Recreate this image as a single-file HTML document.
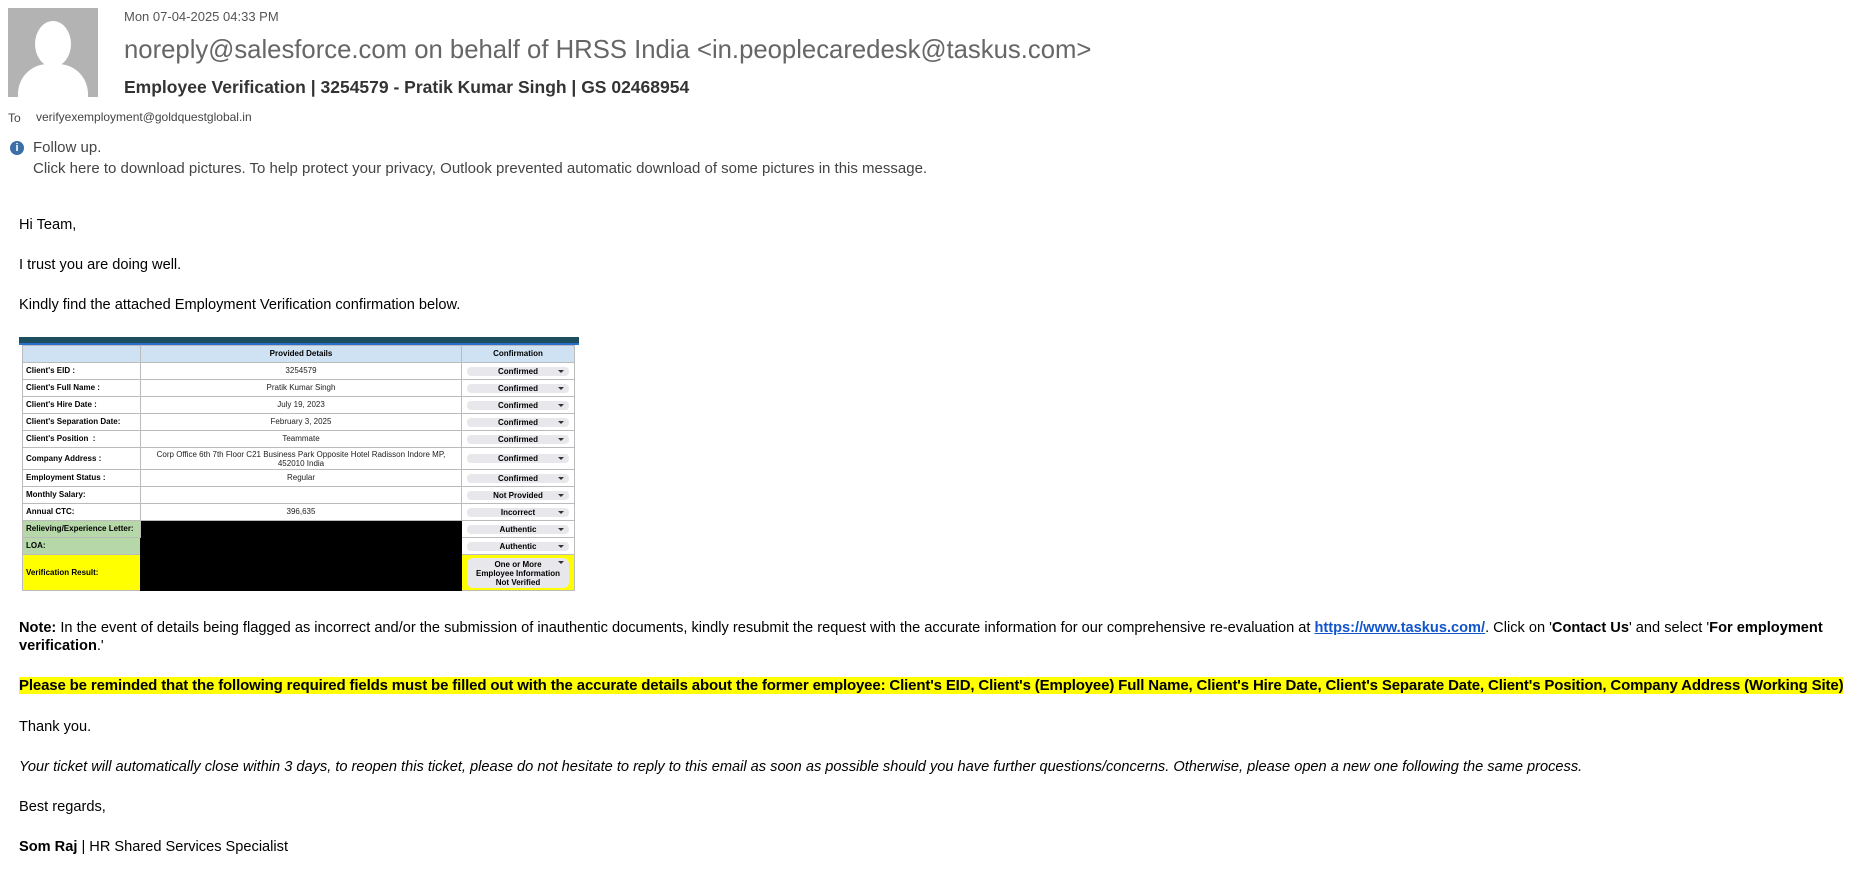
<!DOCTYPE html>
<html><head><meta charset="utf-8"><style>
*{margin:0;padding:0;box-sizing:border-box}
body{width:1858px;height:877px;background:#fff;position:relative;overflow:hidden;font-family:"Liberation Sans",Arial,sans-serif;color:#000}
.a{position:absolute;white-space:nowrap}
.b{font-size:14.6px;left:19px}
table{position:absolute;left:22px;top:345px;border-collapse:collapse;font-size:8px;line-height:1;font-family:"Liberation Sans",Arial,sans-serif}
td{border:1px solid #bbb;height:17px;padding:0 3px;vertical-align:middle}
td.l{width:118px;font-weight:bold}
td.m{width:321px;text-align:center;color:#222}
td.r{width:113px;text-align:center;padding:0 5px}
.p{background:#e8e8ec;border-radius:4px;height:9px;line-height:9px;font-weight:bold;position:relative}
.p:after{content:"";position:absolute;right:5px;top:3px;border-left:3px solid transparent;border-right:3px solid transparent;border-top:3px solid #333}
</style></head><body>
<div class="a" style="left:8px;top:8px;width:90px;height:89px;background:#b3b3b3;overflow:hidden">
<div style="position:absolute;left:27px;top:13px;width:36px;height:46px;border-radius:50%;background:#fff"></div>
<div style="position:absolute;left:10px;top:56px;width:70px;height:60px;border-radius:30px 30px 0 0;background:#fff"></div>
</div>
<div class="a" style="left:124px;top:9px;font-size:13px;color:#555">Mon 07-04-2025 04:33 PM</div>
<div class="a" style="left:124px;top:36px;font-size:25.7px;color:#666">noreply@salesforce.com on behalf of HRSS India &lt;in.peoplecaredesk@taskus.com&gt;</div>
<div class="a" style="left:124px;top:77px;font-size:17.5px;font-weight:bold;color:#333">Employee Verification | 3254579 - Pratik Kumar Singh | GS 02468954</div>
<div class="a" style="left:8px;top:111px;font-size:12px;color:#444">To</div>
<div class="a" style="left:36px;top:110px;font-size:12px;color:#444">verifyexemployment@goldquestglobal.in</div>
<div class="a" style="left:10px;top:141px;width:14px;height:14px;border-radius:50%;background:#3c6ea8;color:#fff;font-size:11px;font-weight:bold;text-align:center;line-height:14px">i</div>
<div class="a" style="left:33px;top:139px;font-size:15px;color:#444">Follow up.</div>
<div class="a" style="left:33px;top:160px;font-size:15px;color:#444">Click here to download pictures. To help protect your privacy, Outlook prevented automatic download of some pictures in this message.</div>
<div class="a b" style="top:217px">Hi Team,</div>
<div class="a b" style="top:257px">I trust you are doing well.</div>
<div class="a b" style="top:297px">Kindly find the attached Employment Verification confirmation below.</div>
<div class="a" style="left:19px;top:337px;width:560px;height:8px;background:#1b4f5f;border-bottom:2px solid #2a6fd0"></div>
<table>
<tr style="background:#cfe2f3;font-weight:bold"><td class="l" style="height:15px"></td><td class="m" style="color:#000">Provided Details</td><td class="r">Confirmation</td></tr>
<tr><td class="l">Client's EID :</td><td class="m">3254579</td><td class="r"><div class="p">Confirmed</div></td></tr>
<tr><td class="l">Client's Full Name :</td><td class="m">Pratik Kumar Singh</td><td class="r"><div class="p">Confirmed</div></td></tr>
<tr><td class="l">Client's Hire Date :</td><td class="m">July 19, 2023</td><td class="r"><div class="p">Confirmed</div></td></tr>
<tr><td class="l">Client's Separation Date:</td><td class="m">February 3, 2025</td><td class="r"><div class="p">Confirmed</div></td></tr>
<tr><td class="l">Client's Position&nbsp; :</td><td class="m">Teammate</td><td class="r"><div class="p">Confirmed</div></td></tr>
<tr><td class="l" style="height:22px">Company Address :</td><td class="m" style="line-height:9px">Corp Office 6th 7th Floor C21 Business Park Opposite Hotel Radisson Indore MP,<br>452010 India</td><td class="r"><div class="p">Confirmed</div></td></tr>
<tr><td class="l">Employment Status :</td><td class="m">Regular</td><td class="r"><div class="p">Confirmed</div></td></tr>
<tr><td class="l">Monthly Salary:</td><td class="m"></td><td class="r"><div class="p">Not Provided</div></td></tr>
<tr><td class="l">Annual CTC:</td><td class="m">396,635</td><td class="r"><div class="p">Incorrect</div></td></tr>
<tr><td class="l" style="background:#b6d7a8">Relieving/Experience Letter:</td><td class="m" rowspan="3" style="background:#000;border-color:#000"></td><td class="r"><div class="p">Authentic</div></td></tr>
<tr><td class="l" style="background:#b6d7a8">LOA:</td><td class="r"><div class="p">Authentic</div></td></tr>
<tr style="background:#ffff00"><td class="l" style="height:36px">Verification Result:</td><td class="r"><div class="p" style="height:30px;line-height:9px;padding-top:2px;border-radius:6px">One or More<br>Employee Information<br>Not Verified</div></td></tr>
</table>
<div class="a b" style="top:619px;line-height:18px;white-space:normal;width:1835px"><b>Note:</b> In the event of details being flagged as incorrect and/or the submission of inauthentic documents, kindly resubmit the request with the accurate information for our comprehensive re-evaluation at <b style="color:#1155cc;text-decoration:underline">https://www.taskus.com/</b>. Click on '<b>Contact Us</b>' and select '<b>For employment verification</b>.'</div>
<div class="a b" style="top:677px;font-size:15px;font-weight:bold;background:#ffff00;letter-spacing:-0.15px">Please be reminded that the following required fields must be filled out with the accurate details about the former employee: Client's EID, Client's (Employee) Full Name, Client's Hire Date, Client's Separate Date, Client's Position, Company Address (Working Site)</div>
<div class="a b" style="top:719px">Thank you.</div>
<div class="a b" style="top:759px;font-style:italic">Your ticket will automatically close within 3 days, to reopen this ticket, please do not hesitate to reply to this email as soon as possible should you have further questions/concerns. Otherwise, please open a new one following the same process.</div>
<div class="a b" style="top:799px">Best regards,</div>
<div class="a b" style="top:839px"><b>Som Raj</b> | HR Shared Services Specialist</div>
</body></html>
